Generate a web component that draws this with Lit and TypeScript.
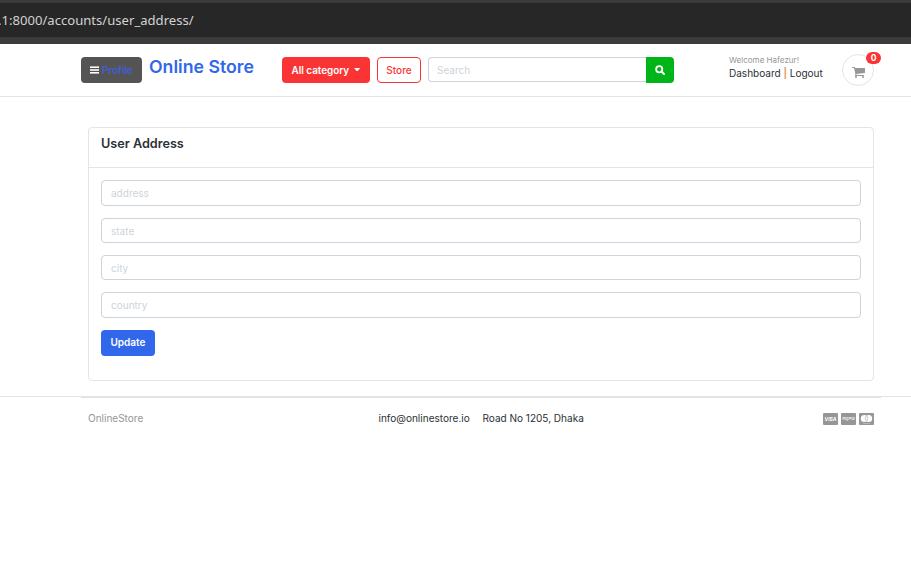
import { LitElement, html, css, svg } from "lit";
import { customElement } from "lit/decorators.js";

const bars = svg`<rect width="9" height="1.6" y="0.4"/><rect width="9" height="1.6" y="3.2"/><rect width="9" height="1.6" y="6"/>`;

@customElement("app-root")
export class AppRoot extends LitElement {
  static styles = css`
    :host { display: block; height: 565px; overflow: hidden; background: #fff; color: #2b3035; font: 400 10.03px/16px Inter, sans-serif; }
    * { box-sizing: border-box; }
    svg { display: block; }
    .url { height: 44px; border: solid #3b3b3b; border-width: 3px 0 7px; background: #272727; color: #d2d2d2; font: 13.1px/35px "Noto Sans", sans-serif; white-space: nowrap; }
    .url span { display: block; margin-left: -2px; }
    header { height: 53px; border-bottom: 1px solid #e4e4e4; display: flex; align-items: flex-start; padding: 13px 0 0 81px; white-space: nowrap; }
    .btn { height: 26px; border-radius: 4px; display: flex; align-items: center; font-weight: 500; line-height: 24px; }
    .btn span { padding-bottom: 1px; }
    .profile { width: 61px; background: #545454; color: #3f5ee0; padding-left: 9px; gap: 3px; font-size: 9.9px; }
    .profile svg { fill: #fff; }
    .brand { margin: -3px 0 0 7px; width: 133px; font-size: 17.7px; line-height: 25px; font-weight: 600; color: #3167eb; }
    .cat { width: 88px; background: #fa3434; color: #fff; padding-left: 9.5px; font-weight: 600; font-size: 9.9px; }
    .caret { margin-left: 5px; width: 6px; height: 3px; margin-top: -1px; background: #fff; clip-path: polygon(0 0, 100% 0, 60% 100%, 40% 100%); }
    .store { width: 44px; margin-left: 7px; border: 1px solid #fa3434; color: #fa3434; justify-content: center; }
    .field { height: 25.33px; border: 1px solid #ced4da; border-radius: 4px; padding: 0 9px; color: #ced4da; line-height: 24px; }
    .search { width: 219px; margin-left: 7px; border-radius: 4px 0 0 4px; border-right: 0; padding-left: 8px; }
    .go { width: 28px; margin-left: -1px; background: #00b517; border-radius: 0 4px 4px 0; justify-content: center; }
    .welcome { margin: -3px 0 0 55px; width: 113px; }
    .hi { font-size: 8.05px; line-height: 13px; color: #969696; }
    .links { margin-top: -1px; font-size: 10.03px; line-height: 14px; }
    .links i { font-style: normal; font-weight: 500; color: #d9822b; }
    .cart { position: relative; margin-top: -3px; width: 32px; height: 32px; border: 1px solid #e4e4e4; border-radius: 50%; display: grid; place-items: center; padding-top: 3px; }
    .badge { position: absolute; left: 23px; top: -3px; width: 15px; height: 12px; border-radius: 6px; background: #fa3434; color: #fff; font-size: 8.5px; font-weight: 700; line-height: 12px; text-align: center; }
    .card { margin: 30px 37px 0 88px; height: 254px; border: 1px solid #e4e4e4; border-radius: 4px; }
    .title { height: 40px; border-bottom: 1px solid #e4e4e4; padding: 8px 12px; font-size: 12.65px; font-weight: 600; line-height: 16px; }
    .form { padding: 12.4px 12px 0; display: grid; row-gap: 12px; }
    .update { width: 54px; background: #3167eb; color: #fff; justify-content: center; font-weight: 600; }
    footer { margin-top: 15px; border-top: 1px solid #e4e4e4; }
    .rule { margin: 0 30px 0 81px; border-top: 1px solid #e0e0e0; padding: 12px 7px 0; display: flex; align-items: center; white-space: nowrap; }
    .name { width: 290.5px; color: #969696; }
    .mail { width: 104px; }
    .pays { margin: 2px 0 0 auto; display: flex; gap: 3px; }
    .pays text { font: italic 700 5px Inter, sans-serif; fill: #fff; }
    .pays .small { font-size: 3.9px; font-weight: 500; }
  `;

  render() {
    return html`
      <div class="url"><span>.1:8000/accounts/user_address/</span></div>
      <header>
        <div class="btn profile"><svg width="9" height="8" viewBox="0 0 9 8">${bars}</svg><span>Profile</span></div>
        <div class="brand">Online Store</div>
        <div class="btn cat"><span>All category</span><div class="caret"></div></div>
        <div class="btn store"><span>Store</span></div>
        <div class="field search">Search</div>
        <div class="btn go">
          <svg width="10" height="10" viewBox="0 0 10 10" fill="none" stroke="#fff"><circle cx="4.2" cy="4.2" r="3.1" stroke-width="1.8"/><path d="M6.500 6.500 9 9" stroke-width="2" stroke-linecap="round"/></svg>
        </div>
        <div class="welcome">
          <div class="hi">Welcome Hafezur!</div>
          <div class="links">Dashboard <i>|</i> Logout</div>
        </div>
        <div class="cart">
          <svg width="13" height="12" viewBox="0 0 1664 1536" fill="#969696"><path d="M640 1408a128 128 0 1 1-256 0 128 128 0 0 1 256 0zm896 0a128 128 0 1 1-256 0 128 128 0 0 1 256 0zm128-1088v512q0 24-16.500 42.500t-40.500 21.500l-1044 122q13 60 13 70 0 16-24 64h920q26 0 45 19t19 45-19 45-45 19h-1024q-26 0-45-19t-19-45q0-11 8-31.500t16-36 21.500-40 15.500-29.500l-177-823h-204q-26 0-45-19t-19-45 19-45 45-19h256q16 0 28.500 6.500t19.500 15.500 13 24.500 8 26 5.500 29.500 4.500 26h1201q26 0 45 19t19 45z"/></svg>
          <span class="badge">0</span>
        </div>
      </header>
      <section class="card">
        <div class="title">User Address</div>
        <div class="form">
          ${["address", "state", "city", "country"].map((f) => html`<div class="field">${f}</div>`)}
          <div class="btn update"><span>Update</span></div>
        </div>
      </section>
      <footer>
        <div class="rule">
          <span class="name">OnlineStore</span><span class="mail">info@onlinestore.io</span><span>Road No 1205, Dhaka</span>
          <div class="pays">
            <svg width="15" height="12" viewBox="0 0 15 12"><rect width="15" height="12" rx="1" fill="#969696"/><text x="1.500" y="7.800" textLength="12" lengthAdjust="spacingAndGlyphs">VISA</text></svg>
            <svg width="15" height="12" viewBox="0 0 15 12"><rect width="15" height="12" rx="1" fill="#969696"/><text class="small" x="1.200" y="7.200" textLength="12.500" lengthAdjust="spacingAndGlyphs">PayPal</text></svg>
            <svg width="15" height="12" viewBox="0 0 15 12"><rect width="15" height="12" rx="1" fill="#969696"/><circle cx="5.300" cy="5.500" r="3.500" fill="#fff"/><circle cx="9.700" cy="5.500" r="3.500" fill="#fff"/><path d="M7.500 2.800a3.500 3.500 0 0 0 0 5.400a3.500 3.500 0 0 0 0-5.400" fill="none" stroke="#969696" stroke-width=".5"/><path d="M4 10.500h7" stroke="#ccc" stroke-width=".6"/></svg>
          </div>
        </div>
      </footer>
    `;
  }
}
